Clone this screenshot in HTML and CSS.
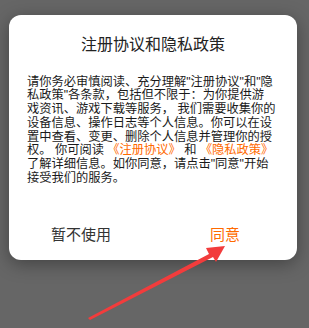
FILE: index.html
```html
<!DOCTYPE html>
<html lang="zh-CN">
<head>
    <meta charset="UTF-8">
    <meta name="viewport" content="width=device-width, initial-scale=1.0">
    <link rel="stylesheet" href="styles.css">
    <title>注册协议和隐私政策</title>
</head>
<body>

    <div class="dialog">
        <h2 class="dialog-title">注册协议和隐私政策</h2>

        <p class="dialog-text">请你务必审慎阅读、充分理解"注册协议"和"隐<br>私政策"各条款，包括但不限于：为你提供游<br>戏资讯、游戏下载等服务， 我们需要收集你的<br>设备信息、操作日志等个人信息。你可以在设<br>置中查看、变更、删除个人信息并管理你的授<br>权。 你可阅读 <a class="link">《注册协议》</a> 和 <a class="link">《隐私政策》</a><br>了解详细信息。如你同意，请点击"同意"开始<br>接受我们的服务。</p>

        <div class="dialog-actions">
            <button type="button" class="btn btn-cancel">暂不使用</button>
            <button type="button" class="btn btn-ok">同意</button>
        </div>
    </div>

    <!-- flèche d'annotation -->
    <svg class="arrow" width="309" height="328" viewBox="0 0 309 328">
        <polygon points="88,318 209,254 206,248 225,246 216,262 213,257 90,320" fill="#f23c3c"/>
    </svg>

</body>
</html>
```

FILE: styles.css
```css
body {
    font-family: 'Noto Sans CJK SC', 'Noto Sans', sans-serif;
    background-color: #666666;
    margin: 0;
    padding: 15px 12px 0 9px;
    height: 328px;
    box-sizing: border-box;
    overflow: hidden;
}

.dialog {
    background-color: #fff;
    border-radius: 12px;
    box-shadow: 0 4px 18px rgba(0, 0, 0, 0.35);
    padding: 17px 12px 15px 18px;
}

.dialog-title {
    font-size: 16px;
    font-weight: normal;
    line-height: 22px;
    color: #222;
    text-align: center;
    margin: 0 0 0 -6px;
}

.dialog-text {
    font-family: 'Liberation Sans', 'Noto Sans CJK SC', sans-serif;
    font-size: 12.25px;
    line-height: 13.8px;
    color: #1a1a1a;
    margin: 21.5px 0 0 0;
    white-space: nowrap;
}

.link {
    color: #ff6a00;
}

.dialog-actions {
    display: flex;
    margin: 37px -12px 0 -18px;
}

.btn {
    flex: 1;
    background: none;
    border: none;
    padding: 0;
    font-family: inherit;
    font-size: 15px;
    line-height: 22px;
    color: #333;
    cursor: pointer;
}

.btn-ok {
    color: #ff6a00;
}

.arrow {
    position: absolute;
    left: 0;
    top: 0;
    pointer-events: none;
}
```
